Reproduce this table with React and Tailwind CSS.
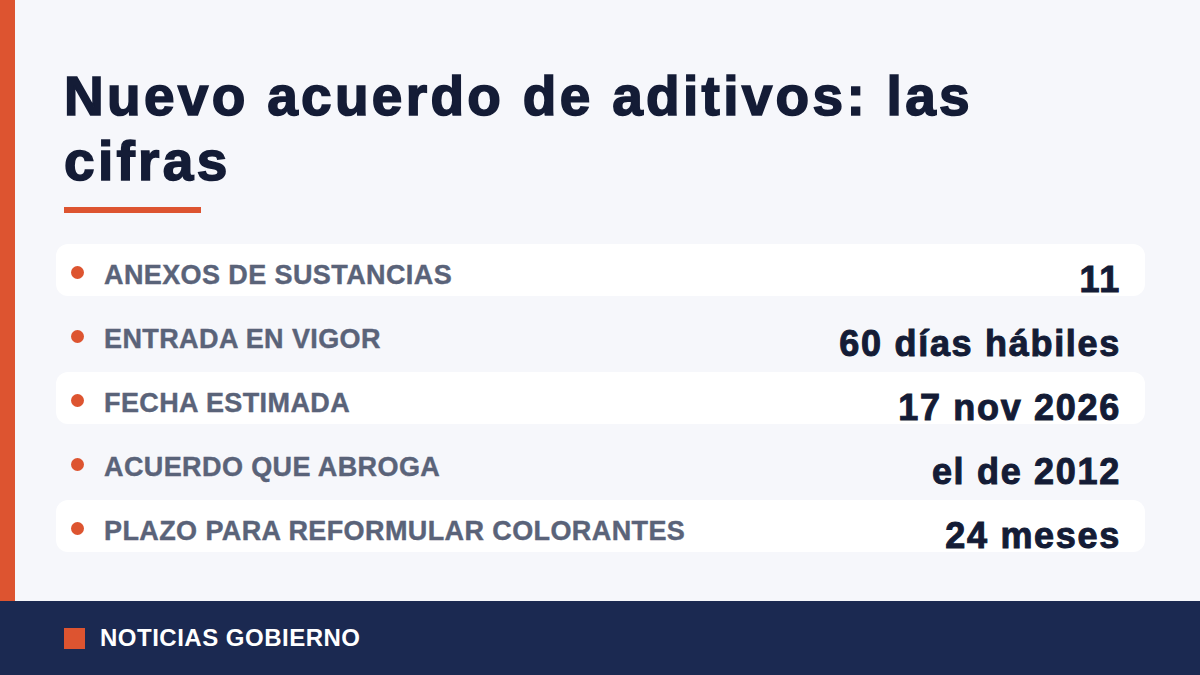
const rows = [
  { label: "ANEXOS DE SUSTANCIAS", value: "11", shaded: true },
  { label: "ENTRADA EN VIGOR", value: "60 días hábiles", shaded: false },
  { label: "FECHA ESTIMADA", value: "17 nov 2026", shaded: true },
  { label: "ACUERDO QUE ABROGA", value: "el de 2012", shaded: false },
  { label: "PLAZO PARA REFORMULAR COLORANTES", value: "24 meses", shaded: true },
];

function StatRow({ label, value, shaded }) {
  return (
    <div
      className={`h-[52px] flex items-start justify-between pt-[18px] pl-[15px] pr-6 rounded-xl leading-none ${
        shaded ? "bg-white" : ""
      }`}
    >
      <div className="flex items-start">
        <span className="w-[13px] h-[13px] mt-[4px] rounded-full bg-[#dd5430] shrink-0"></span>
        <span className="ml-[20px] text-[27px] font-bold tracking-[0.4px] text-[#5a6379] [-webkit-text-stroke:0.4px_#5a6379]">
          {label}
        </span>
      </div>
      <span className="text-[36px] font-bold tracking-[1.7px] text-[#141c36] [-webkit-text-stroke:1px_#141c36]">
        {value}
      </span>
    </div>
  );
}

export default function App() {
  return (
    <div className="w-full h-screen flex flex-col bg-[#f6f7fb] font-['Liberation_Sans',Arial,sans-serif]">
      <div className="flex-1 flex">
        <div className="w-[15px] bg-[#dd5430]"></div>
        <div className="flex-1 flex flex-col pl-[41px] pr-[55px] pt-[64px]">
          <h1 className="ml-2 max-w-[1000px] text-[55px] leading-[65px] font-bold tracking-[3.3px] text-[#141c36] [-webkit-text-stroke:1.6px_#141c36]">
            Nuevo acuerdo de aditivos: las cifras
          </h1>
          <div className="ml-2 mt-[13px] w-[137px] h-[6px] bg-[#dd5430]"></div>
          <div className="mt-[31px] flex flex-col gap-3">
            {rows.map((row) => (
              <StatRow key={row.label} {...row} />
            ))}
          </div>
        </div>
      </div>
      <footer className="h-[74px] bg-[#1b2951] flex items-center pl-16 gap-[15px]">
        <span className="w-[21px] h-[21px] bg-[#dd5430]"></span>
        <span className="text-[24px] font-bold tracking-[0.5px] text-white">NOTICIAS GOBIERNO</span>
      </footer>
    </div>
  );
}
